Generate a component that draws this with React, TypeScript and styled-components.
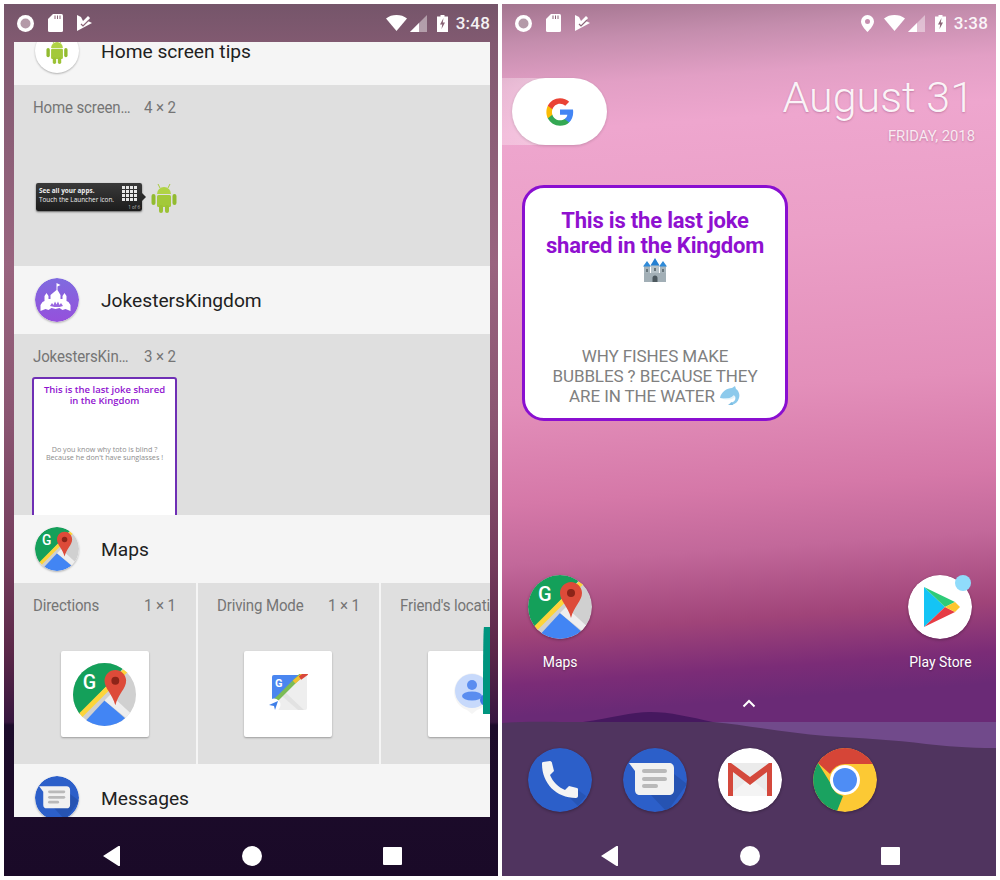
import React from 'react';
import styled, { createGlobalStyle } from 'styled-components';

const GlobalStyle = createGlobalStyle`
    html, body {
        margin: 0;
        padding: 0;
        background: #fff;
        font-family: Roboto, "Liberation Sans", sans-serif;
    }
`;

const Page = styled.div`
    width: 1000px;
    height: 880px;
    padding: 4px;
    box-sizing: border-box;
    display: flex;
    gap: 4px;
    background: #fff;
    overflow: hidden;
`;

const Phone = styled.div<{ $home?: boolean }>`
    position: relative;
    width: 494px;
    height: 872px;
    display: flex;
    flex-direction: column;
    overflow: hidden;
    color: #fff;
    background: ${(p) =>
        p.$home
            ? 'linear-gradient(176deg, #a3758f 0, #c48dad 40px, #e29fc5 85px, #eea6ce 130px, #eb9fc7 250px, #e38fba 400px, #d578a8 500px, #c2689a 560px, #a04479 630px, #7b2c77 680px, #6a2a76 712px)'
            : 'linear-gradient(180deg, #75556a 0, #825a71 40px, #99647f 260px, #8a5571 420px, #743c5c 560px, #5a2748 650px, #37173f 718px, #1d0c2b 721px, #1a0a28 872px)'};
`;

const StatusBar = styled.div`
    position: relative;
    height: 38px;
    flex: none;
    display: flex;
    align-items: center;
    justify-content: space-between;
    padding: 0 8px 0 13px;
`;

const StatusGroup = styled.div`
    display: flex;
    align-items: center;
    gap: 14px;
`;

const StatusRight = styled.div`
    display: flex;
    align-items: center;
`;

const SignalGroup = styled.div`
    display: flex;
    align-items: center;
    gap: 3px;
    margin: 0 10px;
`;

const Clock = styled.span`
    margin-left: 8px;
    font-size: 17px;
    font-weight: 500;
    letter-spacing: 0.2px;
    opacity: 0.92;
`;

const NavBar = styled.div`
    position: absolute;
    left: 0;
    right: 0;
    bottom: 0;
    height: 59px;
    display: grid;
    grid-template-columns: 88px 40px 100px 40px 100px 40px;
    align-items: center;
    padding: 19px 0 0 0;
    box-sizing: border-box;
`;

const NavSlot = styled.div<{ $col: number }>`
    grid-column: ${(p) => p.$col};
    display: flex;
    justify-content: center;
`;

/* widget picker */

const Sheet = styled.div`
    position: relative;
    width: 476px;
    height: 775px;
    margin-left: 10px;
    overflow: hidden;
    background: #f5f5f5;
    color: #212121;
`;

const SheetList = styled.div`
    margin-top: -25px;
`;

const AppHeader = styled.div`
    height: 68px;
    display: flex;
    align-items: center;
    gap: 22px;
    padding-left: 21px;
    background: #f5f5f5;
    font-size: 19.2px;
`;

const AppName = styled.span`
    margin-top: 1px;
`;

const AppBadge = styled.div`
    width: 44px;
    height: 44px;
    flex: none;
    border-radius: 50%;
    box-shadow: 0 1px 2px rgba(0, 0, 0, 0.28);
    overflow: hidden;
    display: flex;
    align-items: center;
    justify-content: center;
    background: #fff;
`;

const WidgetRow = styled.div`
    height: 181px;
    display: flex;
    gap: 2px;
    overflow: hidden;
    background: #f5f5f5;
`;

const WidgetCell = styled.div<{ $grow?: boolean }>`
    flex: none;
    width: ${(p) => (p.$grow ? '100%' : '181.5px')};
    height: 181px;
    box-sizing: border-box;
    padding: 13px 15px 0 19px;
    background: #dfdfdf;
    position: relative;
    overflow: hidden;
`;

const CellHead = styled.div`
    display: flex;
    justify-content: space-between;
    width: 142px;
    font-size: 16px;
    line-height: 20px;
    color: #757575;
    letter-spacing: -0.15px;
    white-space: nowrap;
`;

const CellTitle = styled.span`
    display: inline-block;
    transform: scaleX(0.94);
    transform-origin: left center;
`;

const CellSize = styled.span`
    display: inline-block;
    width: 31px;
`;

const TileSlot = styled.div`
    display: flex;
    justify-content: center;
    margin-top: 35px;
    width: 143px;
`;

const Tile = styled.div`
    width: 88px;
    height: 86px;
    flex: none;
    background: #fff;
    border-radius: 2px;
    box-shadow: 0 1px 2px rgba(0, 0, 0, 0.3);
    display: flex;
    align-items: center;
    justify-content: center;
`;

const TipPreview = styled.div`
    display: flex;
    align-items: center;
    gap: 9px;
    margin: 63px 0 0 3px;
`;

const TipBubble = styled.div`
    position: relative;
    width: 106px;
    height: 28px;
    box-sizing: border-box;
    padding: 3px 0 0 3px;
    border-radius: 2px;
    background: linear-gradient(#3a3a3a, #1c1c1c);
    box-shadow: 0 1px 2px rgba(0, 0, 0, 0.55);
    color: #eee;
    font-family: "Open Sans", sans-serif;
    font-size: 6.4px;
    line-height: 9.5px;
    white-space: nowrap;

    &::after {
        content: '';
        position: absolute;
        right: -4px;
        top: 10px;
        border-left: 4px solid #2a2a2a;
        border-top: 4px solid transparent;
        border-bottom: 4px solid transparent;
    }
`;

const TipTitle = styled.div`
    font-weight: 700;
`;

const TipGrid = styled.div`
    position: absolute;
    left: 86px;
    top: 3px;
    display: grid;
    grid-template-columns: repeat(4, 3px);
    grid-auto-rows: 3px;
    gap: 1px;

    i {
        background: #e8e8e8;
    }
`;

const TipCount = styled.span`
    position: absolute;
    right: 2px;
    bottom: 1px;
    font-size: 4.5px;
    line-height: 6px;
    color: #bbb;
`;

const JokePreview = styled.div`
    width: 145px;
    height: 220px;
    margin: 10px 0 0 -1px;
    box-sizing: border-box;
    border: 2px solid #6f2fb5;
    border-radius: 3px;
    background: #fff;
    padding: 5px 2px;
    text-align: center;
    font-family: "Open Sans", sans-serif;
`;

const JokePreviewTitle = styled.div`
    font-size: 9.5px;
    line-height: 11px;
    font-weight: 600;
    color: #9012d0;
`;

const JokePreviewBody = styled.div`
    margin-top: 39px;
    font-size: 7.2px;
    line-height: 8.2px;
    color: #8d8d8d;
`;

const TealEdge = styled.div`
    position: absolute;
    right: 0;
    top: 585px;
    width: 7.5px;
    height: 87px;
    background: #00957f;
    border-top-left-radius: 1px 60px;
`;

/* home screen */

const HillLayer = styled.svg`
    position: absolute;
    left: 0;
    top: 700px;
    width: 494px;
    height: 172px;
`;

const HomeContent = styled.div`
    position: relative;
    flex: 1;
    display: flex;
    flex-direction: column;
`;

const TopRow = styled.div`
    display: flex;
    justify-content: space-between;
    margin-top: 36px;
    height: 67px;
`;

const SearchTail = styled.div`
    width: 60px;
    height: 67px;
    background: linear-gradient(90deg, rgba(255, 255, 255, 0.28), rgba(255, 255, 255, 0.42));
    position: relative;
`;

const SearchPill = styled.div`
    position: absolute;
    left: 10px;
    top: 0;
    width: 95px;
    height: 67px;
    border-radius: 34px;
    background: #fff;
    box-shadow: 0 1px 3px rgba(0, 0, 0, 0.16);
    display: flex;
    align-items: center;
    justify-content: center;
`;

const DateBlock = styled.div`
    text-align: right;
    padding-right: 21px;
    text-shadow: 0 1px 2px rgba(120, 50, 90, 0.35);
`;

const DateMain = styled.div`
    font-size: 43px;
    font-weight: 300;
    line-height: 52px;
    margin-top: -7px;
    padding-right: 1px;
    color: rgba(255, 255, 255, 0.92);
`;

const DateSub = styled.div`
    font-size: 14.8px;
    line-height: 18px;
    margin-top: 4px;
    color: rgba(255, 255, 255, 0.82);
`;

const JokeWidget = styled.div`
    width: 266px;
    height: 236px;
    margin: 40px 0 0 20px;
    box-sizing: border-box;
    border: 3px solid #8a0fd0;
    border-radius: 22px;
    background: #fff;
    padding: 20px 14px 12px;
    display: flex;
    flex-direction: column;
    justify-content: space-between;
    align-items: center;
    text-align: center;
`;

const JokeHead = styled.div`
    display: flex;
    flex-direction: column;
    align-items: center;
    font-size: 22px;
    line-height: 25px;
    font-weight: 700;
    letter-spacing: -0.2px;
    color: #8f10d0;
`;

const JokeBody = styled.div`
    font-size: 17px;
    line-height: 20px;
    color: #808080;
    letter-spacing: -0.1px;

    svg {
        vertical-align: -4px;
    }
`;

const AppsRow = styled.div`
    display: flex;
    justify-content: space-between;
    margin-top: 154px;
    padding: 0 24px 0 26px;
`;

const Launcher = styled.div`
    position: relative;
    width: 64px;
    display: flex;
    flex-direction: column;
    align-items: center;
    gap: 14px;
`;

const LauncherLabel = styled.span`
    font-size: 14.5px;
    line-height: 20px;
    white-space: nowrap;
    transform: scaleX(0.96);
    text-shadow: 0 1px 2px rgba(0, 0, 0, 0.3);
`;

const NotifyDot = styled.span`
    position: absolute;
    right: 1px;
    top: 0;
    width: 16px;
    height: 16px;
    border-radius: 50%;
    background: #90dcfb;
`;

const Chevron = styled.div`
    display: flex;
    justify-content: center;
    margin-top: 26px;
    height: 14px;
`;

const Dock = styled.div`
    display: flex;
    gap: 31px;
    margin-top: 35px;
    padding-left: 26px;
`;

const RoundIcon = styled.div`
    width: 64px;
    height: 64px;
    border-radius: 50%;
    overflow: hidden;
    box-shadow: 0 1px 3px rgba(0, 0, 0, 0.3);
    flex: none;
`;

/* drawings */

const GoogleG = ({ size }: { size: number }) => (
    <svg width={size} height={size} viewBox="0 0 48 48">
        <path fill="#4285F4" d="M45.1 24.5c0-1.6-.1-3.1-.4-4.5H24v8.5h11.8c-.5 2.8-2.1 5.1-4.4 6.7v5.5h7.1c4.2-3.8 6.6-9.5 6.6-16.2z" />
        <path fill="#34A853" d="M24 46c5.9 0 10.9-2 14.5-5.3l-7.1-5.5c-2 1.3-4.5 2.1-7.4 2.1-5.7 0-10.5-3.8-12.2-9H4.5v5.7C8.1 41.1 15.5 46 24 46z" />
        <path fill="#FBBC05" d="M11.8 28.3c-.4-1.3-.7-2.8-.7-4.3s.3-3 .7-4.3V14H4.5C3 17 2.2 20.4 2.2 24s.8 7 2.3 10l7.3-5.7z" />
        <path fill="#EA4335" d="M24 10.7c3.2 0 6.1 1.1 8.4 3.3l6.3-6.3C34.9 4.2 29.9 2 24 2 15.5 2 8.1 6.9 4.5 14l7.3 5.7c1.7-5.2 6.5-9 12.2-9z" />
    </svg>
);

const MapsIcon = ({ size }: { size: number }) => (
    <svg width={size} height={size} viewBox="0 0 64 64">
        <defs>
            <clipPath id={`maps-${size}`}>
                <circle cx="32" cy="32" r="32" />
            </clipPath>
        </defs>
        <g clipPath={`url(#maps-${size})`}>
            <rect width="64" height="64" fill="#d0d0d0" />
            <path d="M0 0H56L0 60z" fill="#14a05a" />
            <path d="M8 64L32 38L62 64z" fill="#4285f4" />
            <path d="M32 38L38 32L64 56V64z" fill="#eeeeee" />
            <path d="M4 57L56 5" stroke="#fdd53a" strokeWidth="5" fill="none" />
            <path d="M43 7c-6 0-11 5-11 11 0 8 8 13 11 25 3-12 11-17 11-25 0-6-5-11-11-11z" fill="#dd4b39" />
            <circle cx="43" cy="18" r="4" fill="#8c2418" />
            <text x="10" y="26" fontFamily="Roboto, sans-serif" fontWeight="500" fontSize="20" fill="#fff">G</text>
        </g>
    </svg>
);

const MessagesIcon = ({ size }: { size: number }) => (
    <svg width={size} height={size} viewBox="0 0 64 64">
        <circle cx="32" cy="32" r="32" fill="#2c5fc9" />
        <path d="M28 47L44 64 64 36 51 26z" fill="#244fa8" opacity="0.7" />
        <path d="M6 15h40c3 0 5 2 5 5v22c0 3-2 5-5 5H17c-3 0-5-2-5-5V23z" fill="#f1f1f1" />
        <rect x="19" y="21" width="25" height="4" rx="2" fill="#b9b9b9" />
        <rect x="19" y="29" width="25" height="4" rx="2" fill="#b9b9b9" />
        <rect x="19" y="36" width="16" height="4" rx="2" fill="#b9b9b9" />
    </svg>
);

const PhoneIcon = () => (
    <svg width="64" height="64" viewBox="0 0 64 64">
        <circle cx="32" cy="32" r="32" fill="#2c5fc9" />
        <path d="M36 44l14 14 8-10-8-6z" fill="#244fa8" opacity="0.6" />
        <path d="M15 14l7-1c1 0 2 1 2 2l2 8-4 4c3 7 8 12 15 15l4-4 8 2c1 0 1 1 1 2v6c0 1-1 2-2 2-20 0-34-15-34-34 0-1 0-2 1-2z" fill="#f4f4f4" />
    </svg>
);

const GmailIcon = () => (
    <svg width="64" height="64" viewBox="0 0 64 64">
        <circle cx="32" cy="32" r="32" fill="#fff" />
        <rect x="10" y="15" width="44" height="33" fill="#ebebeb" />
        <path d="M10 48L32 30 54 48z" fill="#f4f4f4" />
        <path d="M10 15h3l19 14 19-14h3v33h-5V24L32 37 15 24v24h-5z" fill="#d4493c" />
    </svg>
);

const ChromeIcon = () => (
    <svg width="64" height="64" viewBox="0 0 64 64">
        <circle cx="32" cy="32" r="32" fill="#fcc934" />
        <path d="M32 0A32 32 0 0 1 60 16H32A16 16 0 0 0 17 26L5 15A32 32 0 0 1 32 0z" fill="#d64537" />
        <path d="M5 15L18 36A16 16 0 0 0 30 48L24 63A32 32 0 0 1 5 15z" fill="#1aa260" />
        <circle cx="32" cy="32" r="15" fill="#fff" />
        <circle cx="32" cy="32" r="12" fill="#4e8df5" />
    </svg>
);

const PlayIcon = () => (
    <svg width="64" height="64" viewBox="0 0 64 64">
        <circle cx="32" cy="32" r="32" fill="#fff" />
        <path d="M16 12L37 32 16 52z" fill="#14c4f5" />
        <path d="M16 12L47 27 37 32z" fill="#2ecb78" />
        <path d="M16 52L47 37 37 32z" fill="#e63c45" />
        <path d="M47 27L52 32 47 37 37 32z" fill="#fdc62d" />
    </svg>
);

const AndroidBot = ({ size }: { size: number }) => (
    <svg width={size} height={size * 1.23} viewBox="0 0 26 32">
        <path d="M7 3L9 7M19 3L17 7" stroke="#a8cc3c" strokeWidth="1" />
        <path d="M6 13a7 7 0 0 1 14 0z" fill="#b0d345" />
        <rect x="6" y="14" width="14" height="12" rx="1.5" fill="#a3c93a" />
        <rect x="0.5" y="13" width="4" height="11" rx="2" fill="#92bb30" />
        <rect x="21.5" y="13" width="4" height="11" rx="2" fill="#92bb30" />
        <rect x="8" y="24" width="4" height="8" rx="2" fill="#9cc235" />
        <rect x="14" y="24" width="4" height="8" rx="2" fill="#9cc235" />
    </svg>
);

const CastleBadge = () => (
    <svg width="44" height="44" viewBox="0 0 44 44">
        <defs>
            <linearGradient id="castle-bg" x1="0" y1="0" x2="0" y2="1">
                <stop offset="0" stopColor="#7f6bdf" />
                <stop offset="1" stopColor="#9550dc" />
            </linearGradient>
        </defs>
        <circle cx="22" cy="22" r="22" fill="url(#castle-bg)" />
        <path d="M21.5 12V5l4 2-3 1.5V12l3 5v4h2v-3l2-3 2 3v5l2 1 2 3v6l-5-2-3 1-3-2-4 1-4-1-3 2-3-1-5 2v-6l2-3 2-1v-5l2-3 2 3v3h2v-4z" fill="#fff" />
        <path d="M15 28l2-3 1.5 2 1.500-3.5 1.500 3 1.500-3 1.500 3.500 1.500-2 2 3-3.500 1h-5z" fill="#9a66e0" />
    </svg>
);

const DrivingIcon = () => (
    <svg width="40" height="40" viewBox="0 0 40 40">
        <rect x="4" y="1" width="35" height="35" rx="2" fill="#eeeeee" />
        <path d="M4 3a2 2 0 0 1 2-2h26L4 29z" fill="#4a86f0" />
        <path d="M18 19L36 36h-6L14 22z" fill="#e2e2e2" />
        <path d="M5 29L33 1" stroke="#7cbb55" strokeWidth="4" />
        <path d="M26 8L37 -1" stroke="#f2c031" strokeWidth="4" />
        <path d="M32 4L39 -1" stroke="#d9473a" strokeWidth="4" />
        <circle cx="6" cy="31" r="6.5" fill="#fff" />
        <path d="M1 31l9-4-3 9-1-4z" fill="#3f7fe8" />
        <text x="7" y="13" fontFamily="Roboto, sans-serif" fontWeight="700" fontSize="11" fill="#fff">G</text>
    </svg>
);

const FriendIcon = () => (
    <svg width="50" height="50" viewBox="0 0 50 50">
        <path d="M25 4a19 19 0 0 1 5 37l-5 4-5-4A19 19 0 0 1 25 4z" fill="#f5f5f5" />
        <circle cx="25" cy="22" r="17" fill="#c7d9fb" />
        <circle cx="25" cy="16" r="5" fill="#5a8df0" />
        <ellipse cx="25" cy="27" rx="10" ry="4.5" fill="#5a8df0" />
        <circle cx="39" cy="31" r="6" fill="#3e76e6" />
        <rect x="37" y="28" width="4" height="5" fill="#fff" />
    </svg>
);

const CastleEmoji = () => (
    <svg width="26" height="24" viewBox="0 0 26 24">
        <rect x="2" y="8" width="6" height="16" fill="#a7b4bb" />
        <rect x="18" y="8" width="6" height="16" fill="#a7b4bb" />
        <rect x="9" y="7" width="8" height="17" fill="#b7c3c9" />
        <rect x="2" y="15" width="22" height="9" fill="#a2afb6" />
        <rect x="4" y="11" width="2" height="3" fill="#69767c" />
        <rect x="20" y="11" width="2" height="3" fill="#69767c" />
        <rect x="12" y="10" width="2" height="3" fill="#69767c" />
        <path d="M10.5 24v-4a2.5 2.5 0 0 1 5 0v4z" fill="#4c585e" />
        <path d="M1 8.5L5 3l4 5.5zM17 8.5L21 3l4 5.5z" fill="#2f8ad8" />
        <path d="M8.5 7.5L13 0l4.5 7.5z" fill="#2480d2" />
    </svg>
);

const DolphinEmoji = () => (
    <svg width="22" height="20" viewBox="0 0 22 20">
        <path d="M1 12C2 6 8 2 13 2l3-2 1 3c3 2 4 6 3 9-1 4-4 6-7 7l-2-2 3-1c2-1 3-3 2-6-3 3-9 3-15 2z" fill="#8ccaec" />
        <path d="M4 13c4 0 8-1 11-4l1 2c-3 3-8 3-12 2z" fill="#e3f4fb" />
        <path d="M9 19l4-3 1 3z" fill="#7dbde2" />
    </svg>
);

const ChevronUp = () => (
    <svg width="14" height="9" viewBox="0 0 14 9">
        <path d="M1.5 7.5L7 2l5.5 5.5" stroke="#fff" strokeWidth="2" fill="none" />
    </svg>
);

const RecordDot = () => (
    <svg width="17" height="17" viewBox="0 0 17 17">
        <circle cx="8.5" cy="8.5" r="8.5" fill="#fff" />
        <circle cx="8.5" cy="8.5" r="5" fill="#b49aa8" />
    </svg>
);

const SdCard = () => (
    <svg width="15" height="18" viewBox="0 0 15 18">
        <path d="M5 0h8.5a1.5 1.5 0 0 1 1.5 1.5v15a1.5 1.5 0 0 1-1.5 1.5h-12A1.5 1.5 0 0 1 0 16.5V5z" fill="#fff" />
        <path d="M7 1.5v3.5M9.5 1.5v3.5M12 1.5v3.5" stroke="#8a6577" strokeWidth="1" />
    </svg>
);

const PlayCheck = () => (
    <svg width="15" height="16" viewBox="0 0 15 16">
        <path d="M0 0l4 2 2 4 5-5 2 2-2 3 4 2-15 8z" fill="#fff" />
        <path d="M4 9l2 2 6-6" stroke="#8a6577" strokeWidth="1.2" fill="none" />
    </svg>
);

const LocationPin = () => (
    <svg width="13" height="17" viewBox="0 0 13 17">
        <path fillRule="evenodd" d="M6.5 0A6.5 6.5 0 0 0 0 6.5C0 11 6.5 17 6.5 17S13 11 13 6.5A6.5 6.5 0 0 0 6.5 0zm0 4a2.5 2.5 0 1 1 0 5 2.5 2.5 0 0 1 0-5z" fill="#fff" />
    </svg>
);

const Wifi = () => (
    <svg width="21" height="16" viewBox="0 0 21 16">
        <path d="M0 3.5C3 1 6.5 0 10.5 0S18 1 21 3.5L10.5 16z" fill="#fff" />
    </svg>
);

const Signal = () => (
    <svg width="17" height="17" viewBox="0 0 17 17">
        <path d="M0 17L17 0v17z" fill="#fff" opacity="0.42" />
        <path d="M0 17l9-9v9z" fill="#fff" />
    </svg>
);

const Battery = () => (
    <svg width="11" height="17" viewBox="0 0 11 17">
        <path d="M3.5 0h4v1.5H11V17H0V1.5h3.5z" fill="#fff" />
        <path d="M6.5 3L3 9.5h2.2L4.5 14 8 7.5H5.8z" fill="#8a6577" />
    </svg>
);

const BackGlyph = () => (
    <svg width="18" height="20" viewBox="0 0 18 20">
        <path d="M17 0.5v19a1 1 0 0 1-1.5.5L0 10 15.500 0a1 1 0 0 1 1.500.5z" fill="#fff" />
    </svg>
);

const HomeGlyph = () => (
    <svg width="20" height="20" viewBox="0 0 20 20">
        <circle cx="10" cy="10" r="10" fill="#fff" />
    </svg>
);

const RecentGlyph = () => (
    <svg width="19" height="18" viewBox="0 0 19 18">
        <rect width="19" height="18" rx="1" fill="#fff" />
    </svg>
);

const Navigation = () => (
    <NavBar>
        <NavSlot $col={2}>
            <BackGlyph />
        </NavSlot>
        <NavSlot $col={4}>
            <HomeGlyph />
        </NavSlot>
        <NavSlot $col={6}>
            <RecentGlyph />
        </NavSlot>
    </NavBar>
);

const Status = ({ time, located }: { time: string; located?: boolean }) => (
    <StatusBar>
        <StatusGroup>
            <RecordDot />
            <SdCard />
            <PlayCheck />
        </StatusGroup>
        <StatusRight>
            {located && <LocationPin />}
            <SignalGroup>
                <Wifi />
                <Signal />
            </SignalGroup>
            <Battery />
            <Clock>{time}</Clock>
        </StatusRight>
    </StatusBar>
);

const tipDots = Array.from({ length: 16 });

export default function App() {
    return (
        <>
            <GlobalStyle />
            <Page>
                <Phone>
                    <Status time="3:48" />
                    <Sheet>
                        <SheetList>
                            <AppHeader>
                                <AppBadge>
                                    <AndroidBot size={22} />
                                </AppBadge>
                                <AppName>Home screen tips</AppName>
                            </AppHeader>
                            <WidgetRow>
                                <WidgetCell $grow>
                                    <CellHead>
                                        <CellTitle>Home screen…</CellTitle>
                                        <CellSize>
                                            <CellTitle>4 × 2</CellTitle>
                                        </CellSize>
                                    </CellHead>
                                    <TipPreview>
                                        <TipBubble>
                                            <TipTitle>See all your apps.</TipTitle>
                                            Touch the Launcher icon.
                                            <TipGrid>
                                                {tipDots.map((_, i) => (
                                                    <i key={i} />
                                                ))}
                                            </TipGrid>
                                            <TipCount>1 of 6</TipCount>
                                        </TipBubble>
                                        <AndroidBot size={26} />
                                    </TipPreview>
                                </WidgetCell>
                            </WidgetRow>
                            <AppHeader>
                                <AppBadge>
                                    <CastleBadge />
                                </AppBadge>
                                <AppName>JokestersKingdom</AppName>
                            </AppHeader>
                            <WidgetRow>
                                <WidgetCell $grow>
                                    <CellHead>
                                        <CellTitle>JokestersKin…</CellTitle>
                                        <CellSize>
                                            <CellTitle>3 × 2</CellTitle>
                                        </CellSize>
                                    </CellHead>
                                    <JokePreview>
                                        <JokePreviewTitle>
                                            This is the last joke shared
                                            <br />
                                            in the Kingdom
                                        </JokePreviewTitle>
                                        <JokePreviewBody>
                                            Do you know why toto is blind ?
                                            <br />
                                            Because he don't have sunglasses !
                                        </JokePreviewBody>
                                    </JokePreview>
                                </WidgetCell>
                            </WidgetRow>
                            <AppHeader>
                                <AppBadge>
                                    <MapsIcon size={44} />
                                </AppBadge>
                                <AppName>Maps</AppName>
                            </AppHeader>
                            <WidgetRow>
                                <WidgetCell>
                                    <CellHead>
                                        <CellTitle>Directions</CellTitle>
                                        <CellSize>
                                            <CellTitle>1 × 1</CellTitle>
                                        </CellSize>
                                    </CellHead>
                                    <TileSlot>
                                        <Tile>
                                            <MapsIcon size={63} />
                                        </Tile>
                                    </TileSlot>
                                </WidgetCell>
                                <WidgetCell>
                                    <CellHead>
                                        <CellTitle>Driving Mode</CellTitle>
                                        <CellSize>
                                            <CellTitle>1 × 1</CellTitle>
                                        </CellSize>
                                    </CellHead>
                                    <TileSlot>
                                        <Tile>
                                            <DrivingIcon />
                                        </Tile>
                                    </TileSlot>
                                </WidgetCell>
                                <WidgetCell>
                                    <CellHead>
                                        <CellTitle>Friend's location</CellTitle>
                                    </CellHead>
                                    <TileSlot>
                                        <Tile>
                                            <FriendIcon />
                                        </Tile>
                                    </TileSlot>
                                </WidgetCell>
                            </WidgetRow>
                            <AppHeader>
                                <AppBadge>
                                    <MessagesIcon size={44} />
                                </AppBadge>
                                <AppName>Messages</AppName>
                            </AppHeader>
                        </SheetList>
                        <TealEdge />
                    </Sheet>
                    <Navigation />
                </Phone>

                <Phone $home>
                    <HillLayer viewBox="0 0 494 172">
                        <path d="M81 18C110 14 130 8 148 8c20 0 40 5 63 10z" fill="#46185f" />
                        <path d="M0 19c20-2 50-1 81-1H494V172H0z" fill="#50345f" />
                        <path d="M211 18H494V44c-30 0-50-2-70-4-30-4-70-6-100-8-40-3-80-11-113-14z" fill="#714a8b" />
                    </HillLayer>
                    <Status time="3:38" located />
                    <HomeContent>
                        <TopRow>
                            <SearchTail>
                                <SearchPill>
                                    <GoogleG size={30} />
                                </SearchPill>
                            </SearchTail>
                            <DateBlock>
                                <DateMain>August 31</DateMain>
                                <DateSub>FRIDAY, 2018</DateSub>
                            </DateBlock>
                        </TopRow>
                        <JokeWidget>
                            <JokeHead>
                                This is the last joke
                                <br />
                                shared in the Kingdom
                                <CastleEmoji />
                            </JokeHead>
                            <JokeBody>
                                WHY FISHES MAKE
                                <br />
                                BUBBLES ? BECAUSE THEY
                                <br />
                                ARE IN THE WATER <DolphinEmoji />
                            </JokeBody>
                        </JokeWidget>
                        <AppsRow>
                            <Launcher>
                                <RoundIcon>
                                    <MapsIcon size={64} />
                                </RoundIcon>
                                <LauncherLabel>Maps</LauncherLabel>
                            </Launcher>
                            <Launcher>
                                <RoundIcon>
                                    <PlayIcon />
                                </RoundIcon>
                                <NotifyDot />
                                <LauncherLabel>Play Store</LauncherLabel>
                            </Launcher>
                        </AppsRow>
                        <Chevron>
                            <ChevronUp />
                        </Chevron>
                        <Dock>
                            <RoundIcon>
                                <PhoneIcon />
                            </RoundIcon>
                            <RoundIcon>
                                <MessagesIcon size={64} />
                            </RoundIcon>
                            <RoundIcon>
                                <GmailIcon />
                            </RoundIcon>
                            <RoundIcon>
                                <ChromeIcon />
                            </RoundIcon>
                        </Dock>
                    </HomeContent>
                    <Navigation />
                </Phone>
            </Page>
        </>
    );
}
